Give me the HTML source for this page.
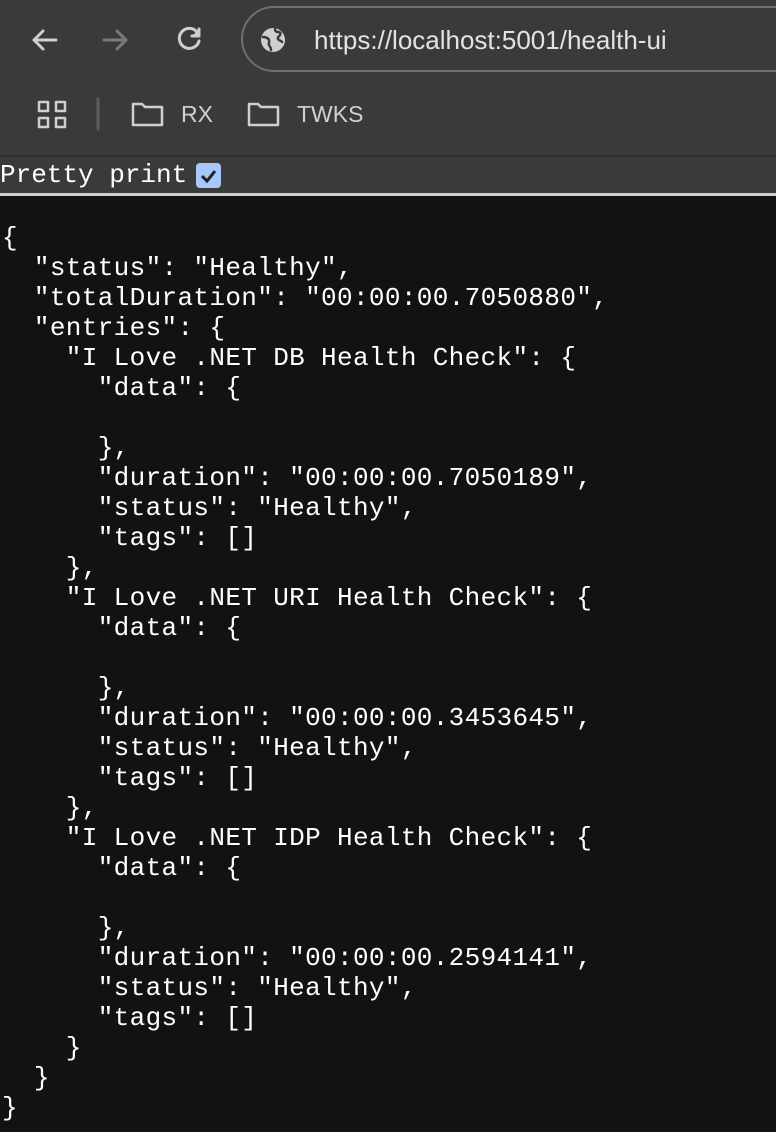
<!DOCTYPE html>
<html><head><meta charset="utf-8"><style>
html,body{margin:0;padding:0;width:776px;height:1132px;overflow:hidden;background:#121212}
.chrome{position:absolute;left:0;top:0;width:776px;height:155px;background:#3a3a3a}
.sep{position:absolute;left:0;top:155px;width:776px;height:2px;background:#303030}
.pp{position:absolute;left:0;top:157px;width:776px;height:37px;background:#3a3a3a;font-family:"Liberation Mono",monospace;font-size:26px;color:#fff;line-height:37px}
.line{position:absolute;left:0;top:193px;width:776px;height:3px;background:#cfcfcf}
.cb{position:absolute;left:196px;top:6px;width:25px;height:25px;background:#a8c7fa;border-radius:4px}
.url{position:absolute;left:241px;top:6px;width:600px;height:66px;border:2px solid #6f6f6f;border-radius:35px;box-sizing:border-box}
.urltxt{position:absolute;left:314px;top:25px;font-family:"Liberation Sans",sans-serif;font-size:26px;color:#e3e3e3}
.bm{position:absolute;top:101px;font-family:"Liberation Sans",sans-serif;font-size:23px;color:#d0d0d0}
pre{position:absolute;left:2px;top:223px;margin:0;font-family:"Liberation Mono",monospace;font-size:26px;line-height:30px;color:#fff;letter-spacing:0.35px}
</style></head><body>
<div class="chrome">
<svg width="776" height="155" style="position:absolute;left:0;top:0" fill="none" stroke-linecap="round" stroke-linejoin="round">
<g stroke="#cfcfcf" stroke-width="3"><path d="M34 40H56M34 40L43 31M34 40L43 49"/></g>
<g stroke="#7a7a7a" stroke-width="3"><path d="M104 40H126M126 40L117 31M126 40L117 49"/></g>
<g stroke="#cfcfcf" stroke-width="3"><path d="M197 32A10 10 0 1 0 199 41"/><path d="M199 29V36H192" fill="#cfcfcf"/></g>
<circle cx="273" cy="40" r="12" fill="#cfcfcf"/>
<path d="M263 37c3 0 5 1 6 3s-1 3 0 5 2 2 2 5M275 29c0 2 1 3 3 3s3 1 2 3-3 2-2 4 3 1 4 3" stroke="#3a3a3a" stroke-width="2.5"/>
<g stroke="#cfcfcf" stroke-width="2.5"><rect x="39" y="102" width="9" height="9"/><rect x="56" y="102" width="9" height="9"/><rect x="39" y="118" width="9" height="9"/><rect x="56" y="118" width="9" height="9"/></g>
<path d="M98 99V129" stroke="#5e5e5e" stroke-width="3"/>
<g stroke="#cfcfcf" stroke-width="2.5"><path d="M133 104h9l3 3h17v18h-29z"/><path d="M249 104h9l3 3h17v18h-29z"/></g>
</svg>
<div class="url"></div>
<div class="urltxt">https://localhost:5001/health-ui</div>
<div class="bm" style="left:181px">RX</div>
<div class="bm" style="left:297px">TWKS</div>
</div>
<div class="sep"></div>
<div class="pp">Pretty print<div class="cb"><svg width="25" height="25"><path d="M6 13l5 5 8-10" stroke="#222" stroke-width="3" fill="none"/></svg></div></div>
<div class="line"></div>
<pre>{
  "status": "Healthy",
  "totalDuration": "00:00:00.7050880",
  "entries": {
    "I Love .NET DB Health Check": {
      "data": {

      },
      "duration": "00:00:00.7050189",
      "status": "Healthy",
      "tags": []
    },
    "I Love .NET URI Health Check": {
      "data": {

      },
      "duration": "00:00:00.3453645",
      "status": "Healthy",
      "tags": []
    },
    "I Love .NET IDP Health Check": {
      "data": {

      },
      "duration": "00:00:00.2594141",
      "status": "Healthy",
      "tags": []
    }
  }
}</pre>
</body></html>
